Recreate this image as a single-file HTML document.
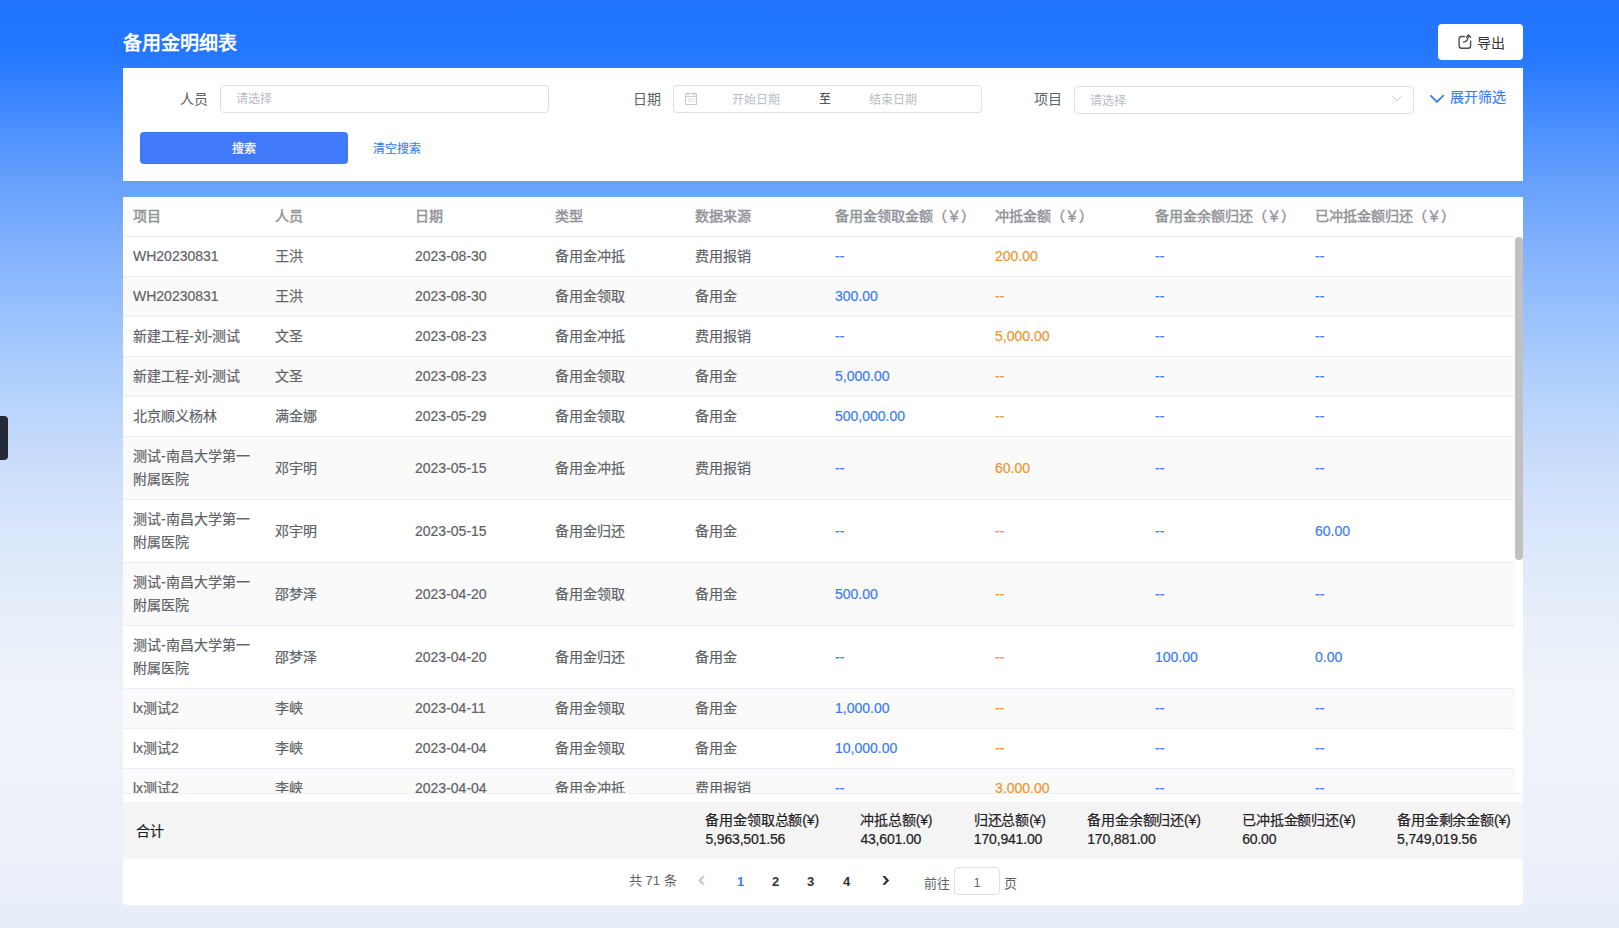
<!DOCTYPE html>
<html lang="zh-CN">
<head>
<meta charset="utf-8">
<style>
*{box-sizing:border-box;margin:0;padding:0}
html,body{width:1619px;height:928px;overflow:hidden}
body{position:relative;font-family:"Liberation Sans",sans-serif;font-size:14px;color:#606266;
background:linear-gradient(180deg,#2173fe 0px,#2276ff 50px,#3c87ff 100px,#5697ff 150px,#64a0fb 180px,#83b2fd 250px,#9bc2fd 320px,#b0d0fd 380px,#c7dbfa 450px,#d9e6fb 530px,#e8eff9 620px,#eff3f9 700px,#edf1fa 800px,#e8eef8 928px)}
.abs{position:absolute}
#tab{left:0;top:416px;width:8px;height:44px;background:#232a36;border-radius:0 4px 4px 0}

#title{left:123px;top:31px;font-size:19px;font-weight:bold;color:#fff;line-height:26px}
.lbl{font-size:14px;color:#606266;line-height:20px;white-space:nowrap}
.inp{border:1px solid #dcdfe6;border-radius:4px;background:#fff;height:28px}
.ph{font-size:12px;color:#b8bcc4;line-height:16px;white-space:nowrap}
#btn{left:140px;top:132px;width:208px;height:32px;background:#407af8;border-radius:4px;color:#fff;font-size:12px;font-weight:500;text-align:center;line-height:34px;-webkit-text-stroke:0.25px currentColor}
.link{color:#3b7cf6;white-space:nowrap;-webkit-text-stroke:0.15px currentColor}
#export{left:1438px;top:24px;width:85px;height:36px;background:#fff;border-radius:4px}
#filter{left:123px;top:68px;width:1400px;height:113px;background:#fff}
#tablebox{left:123px;top:197px;width:1400px;height:708px;background:#fff;border-radius:0 0 4px 4px;overflow:hidden}

#tscroll{position:absolute;left:0;top:0;width:1400px;height:597px;overflow:hidden;border-bottom:1px solid #ebeef5}
.tr{display:flex;align-items:center;border-bottom:1px solid #ebeef5;background:#fff;width:1392px}
.tr.st{background:#fafafa}
.c{flex:none;-webkit-text-stroke:0.2px currentColor;padding:8px 10px;line-height:23px;font-size:14px;color:#606266;word-break:break-all}
.th .c{color:#909399;font-weight:500;-webkit-text-stroke:0.45px currentColor}
.c.b{color:#3b7cf6}
.c.o{color:#f0952f}
#thumb{position:absolute;left:1392px;top:40px;width:8px;height:323px;background:#c1c1c1;border-radius:4px}

#summary{position:absolute;left:0;top:605px;width:1400px;height:57px;background:#f4f4f5;color:#1f2023}
.sl{position:absolute;left:13px;top:19px;font-size:14px;line-height:20px;font-weight:500;-webkit-text-stroke:0.2px currentColor}
.sitems{position:absolute;right:12.5px;top:9px;display:flex}
.si{margin-left:41.5px;letter-spacing:-0.17px;font-size:14px;line-height:19px;white-space:nowrap;font-weight:500;-webkit-text-stroke:0.2px currentColor}
.ptotal{font-size:13px;color:#606266;line-height:18px;white-space:nowrap}
.pnum{font-size:13px;font-weight:bold;color:#303133;line-height:18px}
.pnum.act{color:#3b7cf6}
</style>
</head>
<body>
<div id="tab" class="abs"></div>
<div id="title" class="abs">备用金明细表</div>
<div id="export" class="abs"></div>
<svg class="abs" style="left:1454px;top:30px" width="22" height="22" viewBox="0 0 22 22" fill="none" stroke="#4c4d52" stroke-width="1.4" stroke-linecap="round" stroke-linejoin="round"><path d="M10.4 6.5H7.6A2.5 2.5 0 0 0 5.1 9V15.8A2.5 2.5 0 0 0 7.6 18.3H14.1A2.5 2.5 0 0 0 16.6 15.8V10.9"/><path d="M9.6 12.1C12.6 11.8 14.2 9.6 14.5 5.3"/><path d="M12.4 7.3L14.5 5.1L16.6 7.3"/></svg>
<div class="abs" style="left:1477px;top:33px;font-size:14px;line-height:20px;color:#333">导出</div>
<div id="filter" class="abs"></div>
<div class="abs lbl" style="left:180px;top:89px">人员</div>
<div class="abs inp" style="left:220px;top:85px;width:329px"></div>
<div class="abs ph" style="left:236px;top:91px">请选择</div>
<div class="abs lbl" style="left:633px;top:89px">日期</div>
<div class="abs inp" style="left:673px;top:85px;width:309px"></div>
<svg class="abs" style="left:680px;top:88px" width="22" height="22" viewBox="0 0 22 22" fill="none" stroke="#c0c4cc" stroke-width="0.9"><rect x="5.45" y="5.7" width="11.05" height="10.8"/><path d="M5.45 8.4H16.5"/><path d="M7.9 4.9V6.6M14.2 4.9V6.6" stroke-width="1.3" stroke-linecap="round"/><g fill="#c0c4cc" stroke="none"><rect x="7.8" y="10.8" width="1" height="1"/><rect x="10.3" y="10.8" width="1.2" height="1"/><rect x="13.1" y="10.8" width="1" height="1"/><rect x="7.8" y="13" width="1" height="1"/><rect x="10.3" y="13" width="1.2" height="1"/><rect x="13.1" y="13" width="1" height="1"/></g></svg>
<div class="abs ph" style="left:732px;top:92px">开始日期</div>
<div class="abs ph" style="left:819px;top:91px;color:#303133">至</div>
<div class="abs ph" style="left:869px;top:92px">结束日期</div>
<div class="abs lbl" style="left:1034px;top:89px">项目</div>
<div class="abs inp" style="left:1074px;top:86px;width:340px;height:28px"></div>
<svg class="abs" style="left:1386px;top:88px" width="22" height="22" viewBox="0 0 22 22" fill="none" stroke="#c0c4cc" stroke-width="1"><path d="M6.3 8.3L10.9 12.8L15.5 8.3"/></svg>
<svg class="abs" style="left:1426px;top:88px" width="22" height="22" viewBox="0 0 22 22" fill="none" stroke="#3b7cf6" stroke-width="1.8" stroke-linecap="round" stroke-linejoin="round"><path d="M4.9 7.8L10.9 13.8L17.3 7.7"/></svg>
<div class="abs ph" style="left:1090px;top:93px">请选择</div>
<div class="abs lbl link" style="left:1450px;top:87px">展开筛选</div>
<div id="btn" class="abs">搜索</div>
<div class="abs link" style="left:373px;top:141px;font-size:12px;line-height:16px">清空搜索</div>
<div id="tablebox" class="abs">
<div id="tscroll">
<div class="tr th"><div class="c" style="width:142px">项目</div><div class="c" style="width:140px">人员</div><div class="c" style="width:140px">日期</div><div class="c" style="width:140px">类型</div><div class="c" style="width:140px">数据来源</div><div class="c" style="width:160px">备用金领取金额（￥）</div><div class="c" style="width:160px">冲抵金额（￥）</div><div class="c" style="width:160px">备用金余额归还（￥）</div><div class="c" style="width:210px">已冲抵金额归还（￥）</div></div>
<div class="tr"><div class="c" style="width:142px">WH20230831</div><div class="c" style="width:140px">王洪</div><div class="c" style="width:140px">2023-08-30</div><div class="c" style="width:140px">备用金冲抵</div><div class="c" style="width:140px">费用报销</div><div class="c b" style="width:160px">--</div><div class="c o" style="width:160px">200.00</div><div class="c b" style="width:160px">--</div><div class="c b" style="width:210px">--</div></div>
<div class="tr st"><div class="c" style="width:142px">WH20230831</div><div class="c" style="width:140px">王洪</div><div class="c" style="width:140px">2023-08-30</div><div class="c" style="width:140px">备用金领取</div><div class="c" style="width:140px">备用金</div><div class="c b" style="width:160px">300.00</div><div class="c o" style="width:160px">--</div><div class="c b" style="width:160px">--</div><div class="c b" style="width:210px">--</div></div>
<div class="tr"><div class="c" style="width:142px">新建工程-刘-测试</div><div class="c" style="width:140px">文圣</div><div class="c" style="width:140px">2023-08-23</div><div class="c" style="width:140px">备用金冲抵</div><div class="c" style="width:140px">费用报销</div><div class="c b" style="width:160px">--</div><div class="c o" style="width:160px">5,000.00</div><div class="c b" style="width:160px">--</div><div class="c b" style="width:210px">--</div></div>
<div class="tr st"><div class="c" style="width:142px">新建工程-刘-测试</div><div class="c" style="width:140px">文圣</div><div class="c" style="width:140px">2023-08-23</div><div class="c" style="width:140px">备用金领取</div><div class="c" style="width:140px">备用金</div><div class="c b" style="width:160px">5,000.00</div><div class="c o" style="width:160px">--</div><div class="c b" style="width:160px">--</div><div class="c b" style="width:210px">--</div></div>
<div class="tr"><div class="c" style="width:142px">北京顺义杨林</div><div class="c" style="width:140px">满金娜</div><div class="c" style="width:140px">2023-05-29</div><div class="c" style="width:140px">备用金领取</div><div class="c" style="width:140px">备用金</div><div class="c b" style="width:160px">500,000.00</div><div class="c o" style="width:160px">--</div><div class="c b" style="width:160px">--</div><div class="c b" style="width:210px">--</div></div>
<div class="tr st"><div class="c" style="width:142px">测试-南昌大学第一附属医院</div><div class="c" style="width:140px">邓宇明</div><div class="c" style="width:140px">2023-05-15</div><div class="c" style="width:140px">备用金冲抵</div><div class="c" style="width:140px">费用报销</div><div class="c b" style="width:160px">--</div><div class="c o" style="width:160px">60.00</div><div class="c b" style="width:160px">--</div><div class="c b" style="width:210px">--</div></div>
<div class="tr"><div class="c" style="width:142px">测试-南昌大学第一附属医院</div><div class="c" style="width:140px">邓宇明</div><div class="c" style="width:140px">2023-05-15</div><div class="c" style="width:140px">备用金归还</div><div class="c" style="width:140px">备用金</div><div class="c b" style="width:160px">--</div><div class="c o" style="width:160px">--</div><div class="c b" style="width:160px">--</div><div class="c b" style="width:210px">60.00</div></div>
<div class="tr st"><div class="c" style="width:142px">测试-南昌大学第一附属医院</div><div class="c" style="width:140px">邵梦泽</div><div class="c" style="width:140px">2023-04-20</div><div class="c" style="width:140px">备用金领取</div><div class="c" style="width:140px">备用金</div><div class="c b" style="width:160px">500.00</div><div class="c o" style="width:160px">--</div><div class="c b" style="width:160px">--</div><div class="c b" style="width:210px">--</div></div>
<div class="tr"><div class="c" style="width:142px">测试-南昌大学第一附属医院</div><div class="c" style="width:140px">邵梦泽</div><div class="c" style="width:140px">2023-04-20</div><div class="c" style="width:140px">备用金归还</div><div class="c" style="width:140px">备用金</div><div class="c b" style="width:160px">--</div><div class="c o" style="width:160px">--</div><div class="c b" style="width:160px">100.00</div><div class="c b" style="width:210px">0.00</div></div>
<div class="tr st"><div class="c" style="width:142px">lx测试2</div><div class="c" style="width:140px">李峡</div><div class="c" style="width:140px">2023-04-11</div><div class="c" style="width:140px">备用金领取</div><div class="c" style="width:140px">备用金</div><div class="c b" style="width:160px">1,000.00</div><div class="c o" style="width:160px">--</div><div class="c b" style="width:160px">--</div><div class="c b" style="width:210px">--</div></div>
<div class="tr"><div class="c" style="width:142px">lx测试2</div><div class="c" style="width:140px">李峡</div><div class="c" style="width:140px">2023-04-04</div><div class="c" style="width:140px">备用金领取</div><div class="c" style="width:140px">备用金</div><div class="c b" style="width:160px">10,000.00</div><div class="c o" style="width:160px">--</div><div class="c b" style="width:160px">--</div><div class="c b" style="width:210px">--</div></div>
<div class="tr st"><div class="c" style="width:142px">lx测试2</div><div class="c" style="width:140px">李峡</div><div class="c" style="width:140px">2023-04-04</div><div class="c" style="width:140px">备用金冲抵</div><div class="c" style="width:140px">费用报销</div><div class="c b" style="width:160px">--</div><div class="c o" style="width:160px">3,000.00</div><div class="c b" style="width:160px">--</div><div class="c b" style="width:210px">--</div></div>
</div><div id="thumb"></div>
<div id="summary">
<div class="sl">合计</div>
<div class="sitems">
<div class="si"><div>备用金领取总额(¥)</div><div>5,963,501.56</div></div>
<div class="si"><div>冲抵总额(¥)</div><div>43,601.00</div></div>
<div class="si"><div>归还总额(¥)</div><div>170,941.00</div></div>
<div class="si"><div>备用金余额归还(¥)</div><div>170,881.00</div></div>
<div class="si"><div>已冲抵金额归还(¥)</div><div>60.00</div></div>
<div class="si"><div>备用金剩余金额(¥)</div><div>5,749,019.56</div></div>
</div>
</div>
<div id="pager">
<span class="abs ptotal" style="left:506px;top:675px">共 71 条</span>
<span class="abs pnum act" style="left:614px;top:676px">1</span>
<span class="abs pnum" style="left:649px;top:676px">2</span>
<span class="abs pnum" style="left:684px;top:676px">3</span>
<span class="abs pnum" style="left:720px;top:676px">4</span>
<svg class="abs" style="left:569px;top:671px" width="20" height="22" viewBox="0 0 20 22"><path d="M10.3 8.1H12.9L9.3 12.4L12.9 16.8H10.3L6.3 12.4Z" fill="#c0c4cc"/></svg>
<svg class="abs" style="left:753px;top:671px" width="20" height="22" viewBox="0 0 20 22"><path d="M6.3 8.1H9.1L13.2 12.4L9.1 16.7H6.3L10.1 12.4Z" fill="#303133"/></svg>
<span class="abs ptotal" style="left:801px;top:678px">前往</span>
<div class="abs inp" style="left:831px;top:670px;width:46px;height:28px;text-align:center;line-height:31px;font-size:12px;color:#606266">1</div>
<span class="abs ptotal" style="left:881px;top:678px">页</span>
</div>
</div>
</body>
</html>
